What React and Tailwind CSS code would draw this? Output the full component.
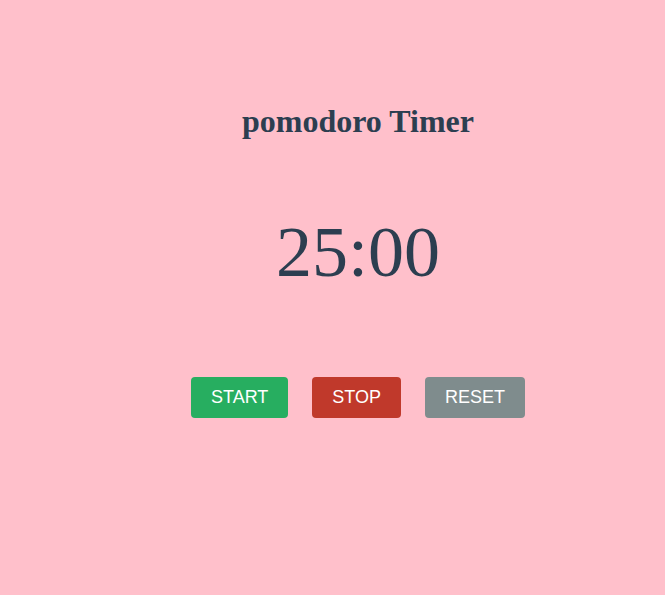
export default function App() {
  const buttons = [
    { label: "START", cls: "bg-[#27ae60]" },
    { label: "STOP", cls: "bg-[#c0392b]" },
    { label: "RESET", cls: "bg-[#7f8c8d]" },
  ];

  return (
    <div className="min-h-[595px] w-full bg-[#ffc0cb] pl-[51px] pt-[103px] flex flex-col items-center text-[#2c3e50] font-['Liberation_Serif',serif]">
      <h1 className="text-[32px] font-bold leading-[normal]">pomodoro Timer</h1>
      <div className="mt-[71px] text-[72px] leading-[normal]">25:00</div>
      <div className="mt-[83px] flex gap-6">
        {buttons.map((b) => (
          <button
            key={b.label}
            className={`${b.cls} text-white text-[18px] leading-[21px] px-5 py-[10px] rounded font-['Liberation_Sans',Arial,sans-serif]`}
          >
            {b.label}
          </button>
        ))}
      </div>
    </div>
  );
}
